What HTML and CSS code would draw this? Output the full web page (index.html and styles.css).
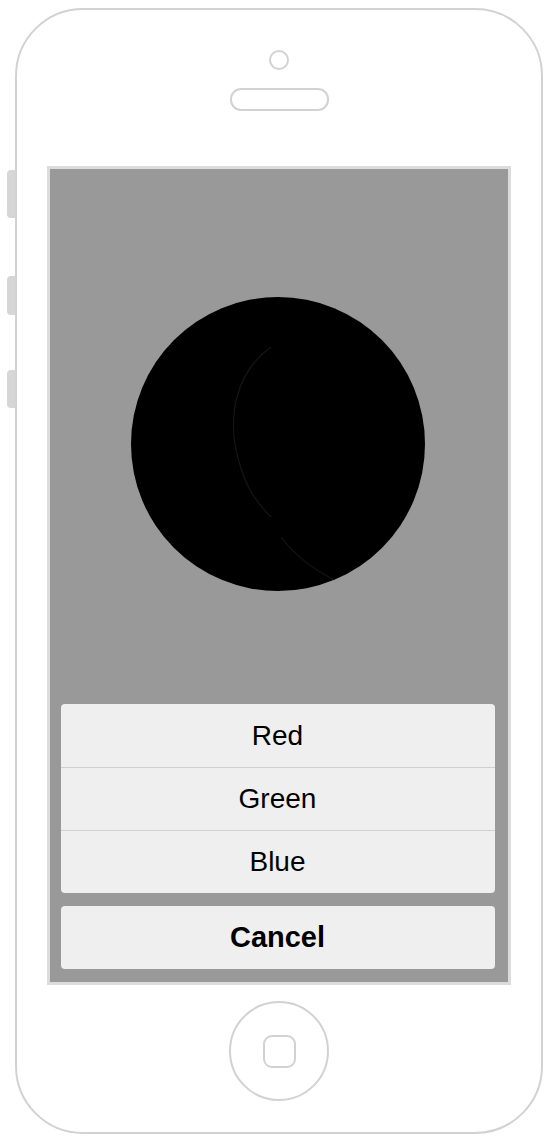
FILE: index.html
```html
<!DOCTYPE html>
<html>
<head>
<meta charset="utf-8">
<link rel="stylesheet" href="styles.css">
</head>
<body>
<div class="device">
  <div class="top-button"></div>
  <div class="side-button side-1"></div>
  <div class="side-button side-2"></div>
  <div class="side-button side-3"></div>
  <div class="phone">
    <div class="camera"></div>
    <div class="speaker"></div>
    <div class="screen">
      <div class="moon">
        <svg class="moon-arc" width="294" height="294" viewBox="0 0 294 294">
          <path d="M140 50 C 105 75, 95 120, 108 165 C 115 190, 125 205, 140 220" fill="none" stroke="#151515" stroke-width="1.2"/>
          <path d="M150 240 C 165 260, 185 275, 212 287" fill="none" stroke="#151515" stroke-width="1.2"/>
        </svg>
      </div>
      <div class="sheet">
        <div class="group">
          <div class="option">Red</div>
          <div class="option">Green</div>
          <div class="option">Blue</div>
        </div>
        <div class="group">
          <div class="option cancel">Cancel</div>
        </div>
      </div>
    </div>
    <div class="home"><div class="home-square"></div></div>
  </div>
</div>
</body>
</html>
```
FILE: styles.css
```css
html, body {
  margin: 0;
  padding: 0;
  background: #ffffff;
}
body {
  width: 550px;
  height: 1136px;
  overflow: hidden;
  font-family: "Liberation Sans", Arial, sans-serif;
}
.device {
  position: relative;
  width: 550px;
  height: 1136px;
}
.top-button {
  position: absolute;
  left: 373px;
  top: 0;
  width: 57px;
  height: 9px;
  background: #d2d2d2;
  border-radius: 5px 5px 0 0;
}
.side-button {
  position: absolute;
  left: 7px;
  width: 9px;
  background: #d6d6d6;
  border-radius: 4px 0 0 4px;
}
.side-1 { top: 162px; height: 48px; }
.side-2 { top: 268px; height: 39px; }
.side-3 { top: 362px; height: 38px; }
.phone {
  position: relative;
  margin-left: 15px;
  margin-top: 8px;
  width: 528px;
  height: 1126px;
  box-sizing: border-box;
  border: 2px solid #d2d2d2;
  border-radius: 68px;
  background: #ffffff;
  display: flex;
  flex-direction: column;
  align-items: center;
}
.camera {
  margin-top: 40px;
  width: 20px;
  height: 20px;
  box-sizing: border-box;
  border: 2px solid #d2d2d2;
  border-radius: 50%;
}
.speaker {
  margin-top: 18px;
  width: 99px;
  height: 23px;
  box-sizing: border-box;
  border: 2px solid #d2d2d2;
  border-radius: 11px;
}
.screen {
  margin-top: 55px;
  width: 464px;
  height: 819px;
  box-sizing: border-box;
  border: 3px solid #dcdcdc;
  background: #999999;
  display: flex;
  flex-direction: column;
  align-items: center;
}
.moon {
  position: relative;
  margin-top: 128px;
  margin-left: -3px;
  width: 294px;
  height: 294px;
  border-radius: 50%;
  background: #000000;
  overflow: hidden;
}
.moon-arc {
  display: block;
}
.sheet {
  margin-top: 113px;
  width: 434px;
  margin-left: -3px;
  display: flex;
  flex-direction: column;
  gap: 13px;
}
.group {
  background: #efefef;
  border-radius: 4px;
  overflow: hidden;
}
.option {
  height: 63px;
  display: flex;
  align-items: center;
  justify-content: center;
  font-size: 28px;
  color: #000000;
  border-top: 1px solid #cfcfcf;
  box-sizing: border-box;
}
.option:first-child {
  border-top: none;
  height: 63px;
}
.cancel {
  font-weight: bold;
  font-size: 29px;
  height: 62px;
}
.home {
  margin-top: 16px;
  width: 100px;
  height: 100px;
  box-sizing: border-box;
  border: 2px solid #d2d2d2;
  border-radius: 50%;
  display: flex;
  align-items: center;
  justify-content: center;
}
.home-square {
  width: 33px;
  height: 33px;
  box-sizing: border-box;
  border: 2px solid #d2d2d2;
  border-radius: 9px;
}
```
